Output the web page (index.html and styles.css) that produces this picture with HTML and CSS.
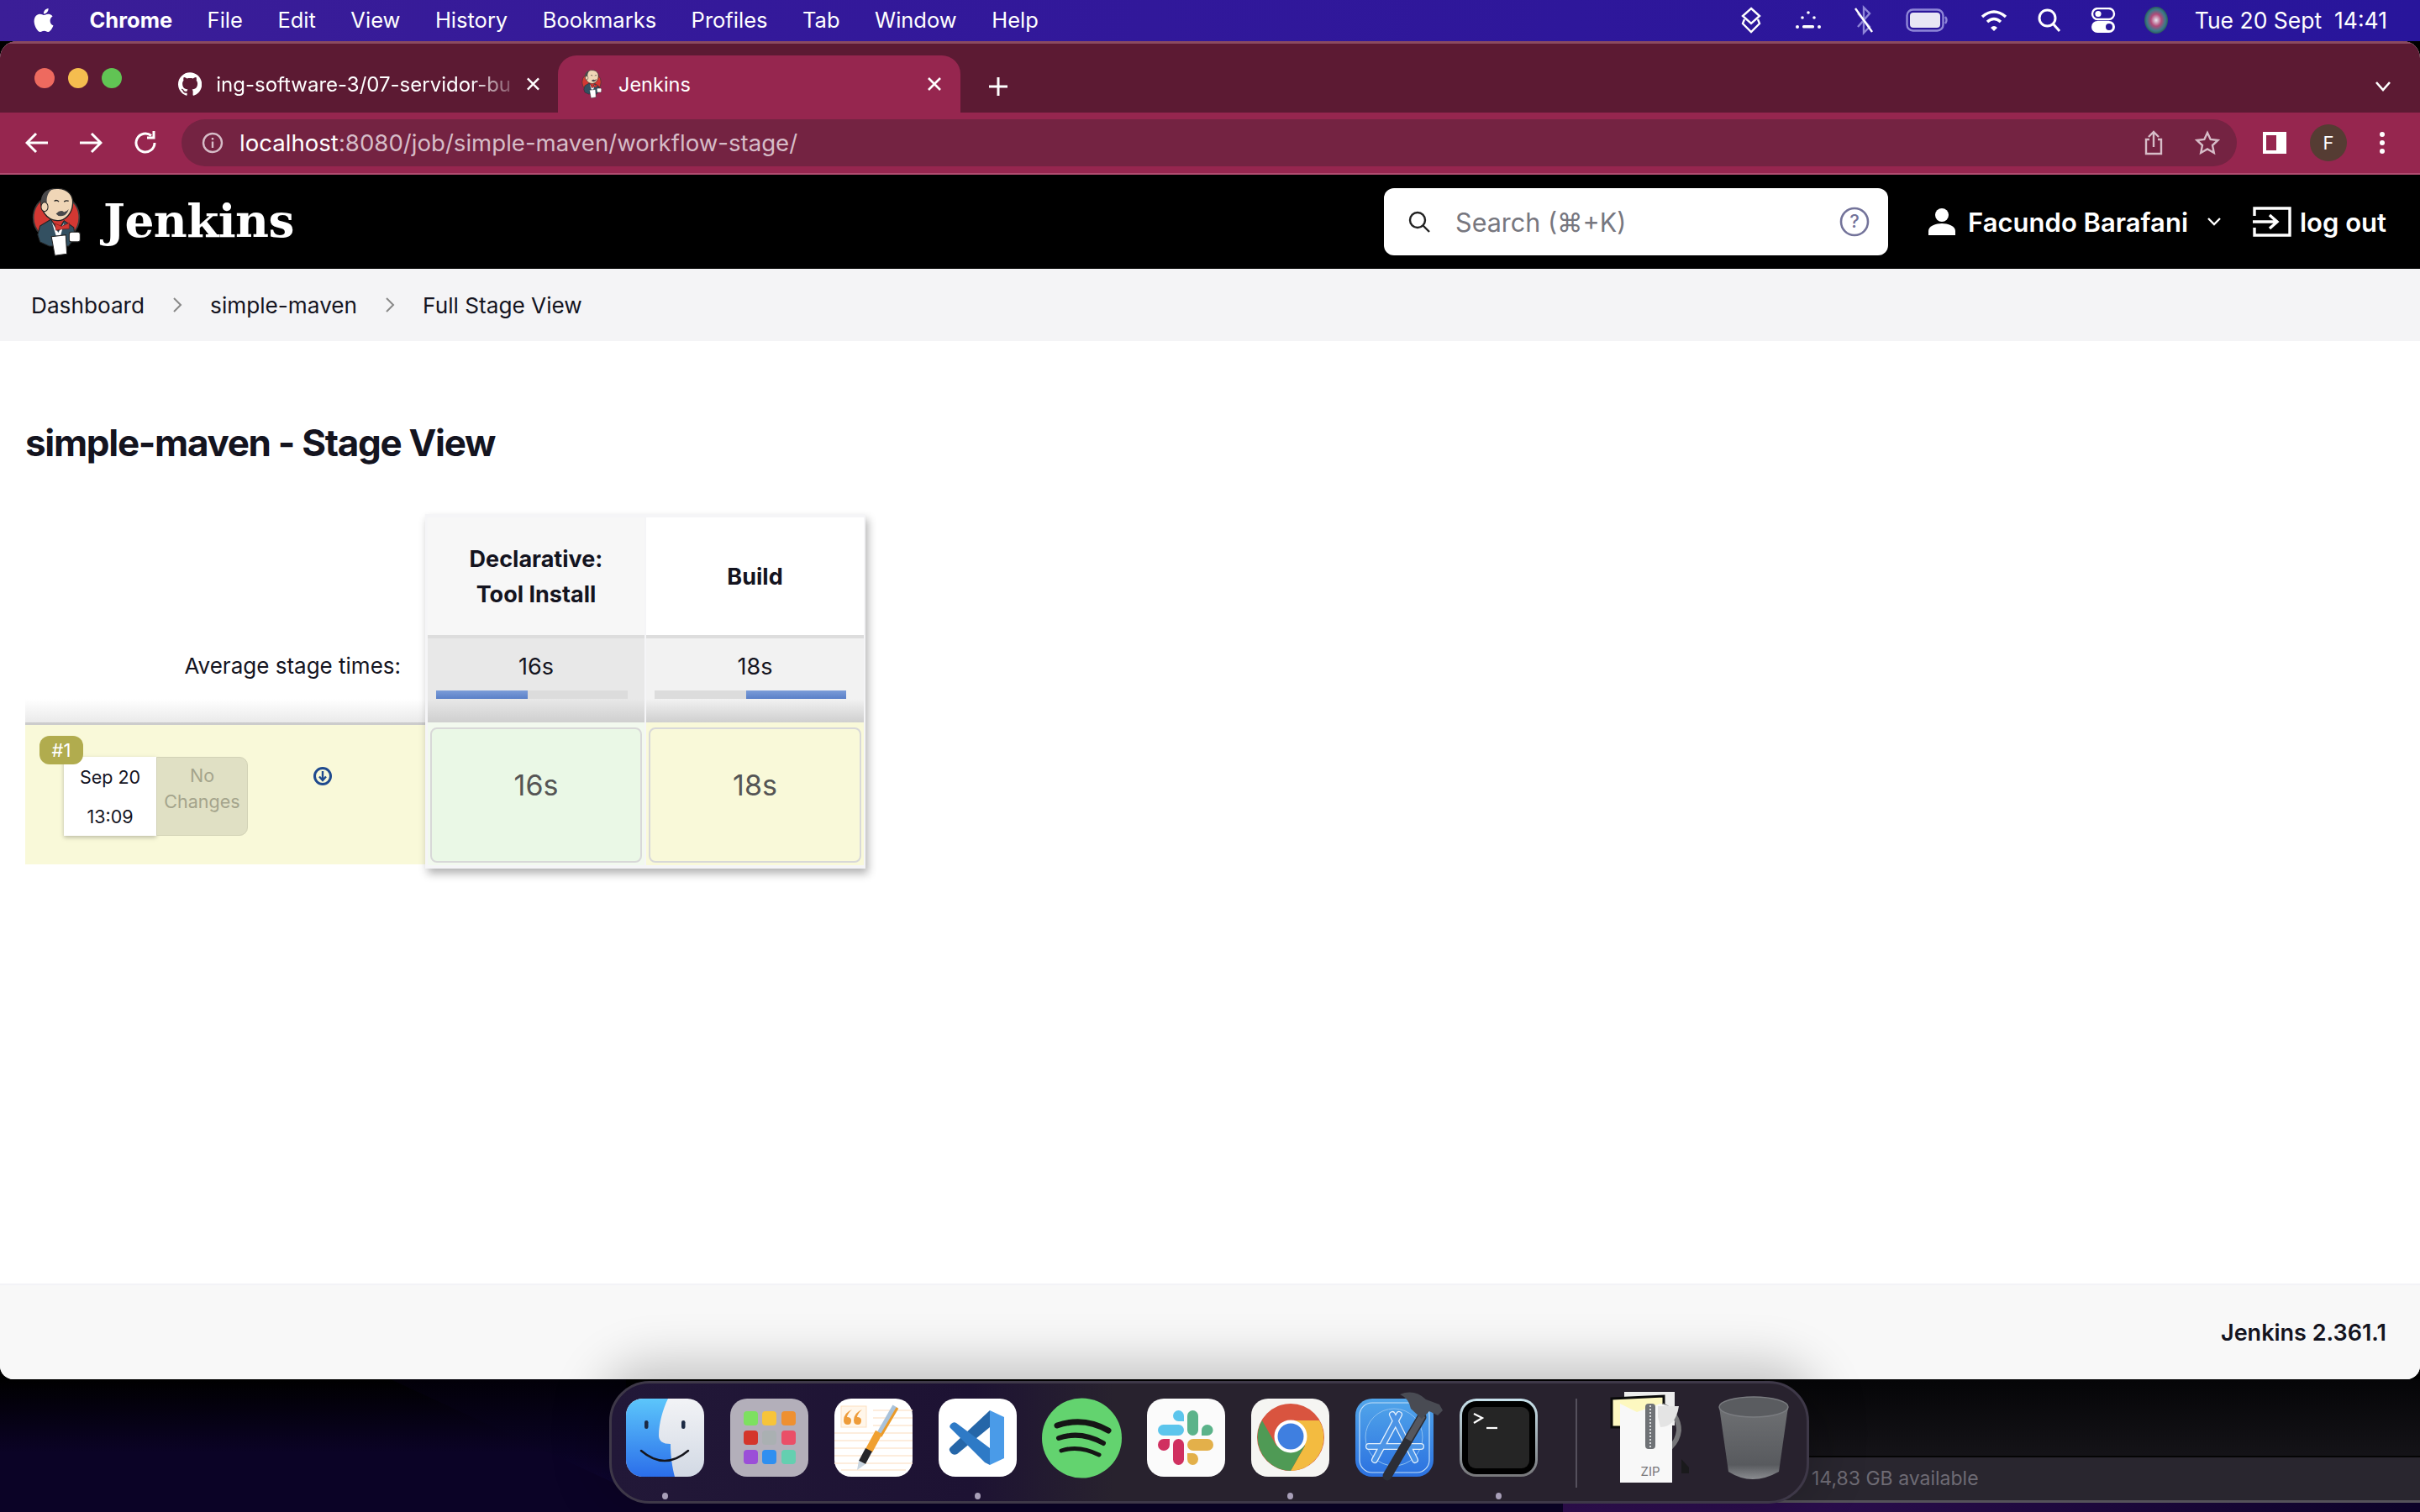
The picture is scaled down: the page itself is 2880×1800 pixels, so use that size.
FILE: index.html
```html
<!DOCTYPE html>
<html lang="en">
<head>
    <meta charset="UTF-8">
    <meta name="viewport" content="width=device-width, initial-scale=1.0">
    <title>Jenkins - Stage View</title>
    <link rel="stylesheet" href="styles.css">
</head>
<body>

    <svg class="defs" width="0" height="0">
        <symbol id="mascot" viewBox="0 0 170 240">
            <circle cx="85" cy="105" r="80" fill="#d33833" stroke="#3a3a3a" stroke-width="5"/>
            <path d="M20 165 L28 135 L66 112 L92 150 L112 116 L146 140 L150 175 L128 205 L60 205 L28 190Z" fill="#335061" stroke="#222" stroke-width="3"/>
            <path d="M70 122 L92 158 L112 124 L100 168 L84 168Z" fill="#fff"/>
            <path d="M80 126 L104 136 L130 124 L130 144 L104 146 L84 150Z" fill="#d33833" stroke="#7a1c1a" stroke-width="2"/>
            <path d="M32 60 C30 20 60 2 92 4 C128 6 146 30 142 60 C140 90 116 118 88 116 C62 114 40 98 32 60Z" fill="#f0d6b7" stroke="#222" stroke-width="4"/>
            <path d="M34 62 C26 26 50 6 72 6 C56 16 50 36 52 52 L44 60Z" fill="#49484a"/>
            <ellipse cx="44" cy="68" rx="12" ry="16" fill="#f0d6b7" stroke="#222" stroke-width="3"/>
            <path d="M78 48 Q86 42 94 50 M112 50 Q120 44 128 48" fill="none" stroke="#222" stroke-width="4"/>
            <path d="M84 92 Q100 76 112 86 Q124 82 128 76 Q122 100 100 100 Q90 100 84 92Z" fill="#49484a"/>
            <path d="M68 172 L118 166 L122 232 L80 238Z" fill="#fff" stroke="#222" stroke-width="3"/>
            <rect x="130" y="156" width="38" height="34" rx="8" fill="#fff" stroke="#222" stroke-width="3"/>
        </symbol>
        <symbol id="apple" viewBox="0 0 24 24">
            <path fill="currentColor" d="M12.152 6.896c-.948 0-2.415-1.078-3.96-1.04-2.04.027-3.91 1.183-4.961 3.014-2.117 3.675-.546 9.103 1.519 12.09 1.013 1.454 2.208 3.09 3.792 3.039 1.52-.065 2.09-.987 3.935-.987 1.831 0 2.35.987 3.96.948 1.637-.026 2.676-1.48 3.676-2.948 1.156-1.688 1.636-3.325 1.662-3.415-.039-.013-3.182-1.221-3.22-4.857-.026-3.04 2.48-4.494 2.597-4.559-1.429-2.09-3.623-2.324-4.39-2.376-2-.156-3.675 1.09-4.61 1.09zM15.53 3.83c.843-1.012 1.4-2.427 1.245-3.83-1.207.052-2.662.805-3.532 1.818-.78.896-1.454 2.338-1.273 3.714 1.338.104 2.715-.688 3.559-1.701"/>
        </symbol>
    </svg>

    <div class="menubar">
        <div class="menu-left">
            <svg class="apple-logo" width="28" height="30"><use href="#apple"/></svg>
            <span class="menu-app">Chrome</span>
            <span>File</span>
            <span>Edit</span>
            <span>View</span>
            <span>History</span>
            <span>Bookmarks</span>
            <span>Profiles</span>
            <span>Tab</span>
            <span>Window</span>
            <span>Help</span>
        </div>
        <div class="menu-right">
            <svg width="28" height="32" viewBox="0 0 28 32" fill="none" stroke="#fff" stroke-width="2.4"><path d="M14 2 L24 11 L14 20 L4 11Z"/><path d="M6 15 L4 20 L14 30 L24 20 L22 15"/></svg>
            <svg width="32" height="24" viewBox="0 0 32 24" fill="#fff"><circle cx="16" cy="3" r="1.8"/><circle cx="9" cy="9" r="1.8"/><circle cx="23" cy="9" r="1.8"/><circle cx="3" cy="20" r="2"/><rect x="9" y="18" width="14" height="3.5" rx="1.5"/><circle cx="29" cy="20" r="2"/></svg>
            <svg width="24" height="36" viewBox="0 0 24 36" fill="none" stroke="#8f86d8" stroke-width="2.4"><path d="M5 10 L19 26 L12 33 V3 L19 10 L5 26"/><path d="M2 4 L22 32" stroke="#fff"/></svg>
            <svg width="50" height="28" viewBox="0 0 50 28"><rect x="1.500" y="1.500" width="43" height="25" rx="7" fill="none" stroke="#8f86d8" stroke-width="2.400"/><rect x="5" y="5" width="36" height="18" rx="4" fill="#e8e6f4"/><path d="M47 10 Q50 14 47 18" fill="none" stroke="#8f86d8" stroke-width="2.400"/></svg>
            <svg width="34" height="28" viewBox="0 0 34 28" fill="none" stroke="#fff" stroke-width="3.600"><path d="M3 10 Q17 -2 31 10"/><path d="M9 16 Q17 9 25 16"/><path d="M13 23 L17 27 L21 23 Q17 19 13 23Z" fill="#fff" stroke="none"/></svg>
            <svg width="30" height="30" viewBox="0 0 30 30" fill="none" stroke="#fff" stroke-width="3"><circle cx="12.500" cy="12.500" r="9.500"/><path d="M19.500 19.500 L27 28"/></svg>
            <svg width="30" height="30" viewBox="0 0 30 30"><rect x="2" y="1" width="26" height="13" rx="6.500" fill="none" stroke="#fff" stroke-width="2.400"/><circle cx="9" cy="7.500" r="3.600" fill="#fff"/><rect x="1" y="16" width="28" height="14" rx="7" fill="#fff"/><circle cx="22" cy="23" r="4" fill="#2a169a"/></svg>
            <svg width="28" height="34" viewBox="0 0 28 34"><defs><radialGradient id="siri"><stop offset="0" stop-color="#e8e8f0"/><stop offset=".45" stop-color="#b04a78"/><stop offset=".8" stop-color="#3a7a8a"/><stop offset="1" stop-color="#2c5a5a"/></radialGradient></defs><ellipse cx="14" cy="17" rx="14" ry="16" fill="url(#siri)"/></svg>
            <span class="menu-clock">Tue 20 Sept&nbsp;&nbsp;14:41</span>
        </div>
    </div>

    <div class="wallpaper-wedge"></div>
    <div class="wallpaper-strip"></div>

    <div class="desktop-window">
        <div class="desktop-status">14,83 GB available</div>
    </div>

    <div class="browser">
        <div class="tabstrip">
            <div class="traffic">
                <span class="light red"></span>
                <span class="light yellow"></span>
                <span class="light green"></span>
            </div>
            <div class="tab">
                <svg width="30" height="30" viewBox="0 0 24 24"><path fill="#fff" d="M12 .297c-6.63 0-12 5.373-12 12 0 5.303 3.438 9.8 8.205 11.385.6.113.82-.258.82-.577 0-.285-.01-1.04-.015-2.04-3.338.724-4.042-1.61-4.042-1.61C4.422 18.07 3.633 17.7 3.633 17.7c-1.087-.744.084-.729.084-.729 1.205.084 1.838 1.236 1.838 1.236 1.07 1.835 2.809 1.305 3.495.998.108-.776.417-1.305.76-1.605-2.665-.3-5.466-1.332-5.466-5.93 0-1.31.465-2.38 1.235-3.22-.135-.303-.54-1.523.105-3.176 0 0 1.005-.322 3.3 1.23.96-.267 1.98-.399 3-.405 1.02.006 2.04.138 3 .405 2.28-1.552 3.285-1.23 3.285-1.23.645 1.653.24 2.873.12 3.176.765.84 1.23 1.91 1.23 3.22 0 4.61-2.805 5.625-5.475 5.92.42.36.81 1.096.81 2.22 0 1.606-.015 2.896-.03 3.286 0 .315.21.69.825.57C20.565 22.092 24 17.592 24 12.297c0-6.627-5.373-12-12-12"/></svg>
                <span class="tab-title fade">ing-software-3/07-servidor-bu</span>
                <svg class="tab-close" width="18" height="18" viewBox="0 0 18 18"><path d="M2 2 L16 16 M16 2 L2 16" stroke="#fff" stroke-width="2.600"/></svg>
            </div>
            <div class="tab tab-active">
                <svg width="24" height="34"><use href="#mascot"/></svg>
                <span class="tab-title">Jenkins</span>
                <svg class="tab-close" width="18" height="18" viewBox="0 0 18 18"><path d="M2 2 L16 16 M16 2 L2 16" stroke="#fff" stroke-width="2.600"/></svg>
            </div>
            <svg class="new-tab" width="24" height="24" viewBox="0 0 24 24"><path d="M12 1 V23 M1 12 H23" stroke="#fff" stroke-width="3"/></svg>
            <svg class="tab-list" width="20" height="14" viewBox="0 0 20 14"><path d="M2 2 L10 11 L18 2" fill="none" stroke="#fff" stroke-width="2.600"/></svg>
        </div>

        <div class="toolbar">
            <svg width="28" height="28" viewBox="0 0 28 28" fill="none" stroke="#fff" stroke-width="3"><path d="M27 14 H3 M13 3 L2 14 L13 25"/></svg>
            <svg width="28" height="28" viewBox="0 0 28 28" fill="none" stroke="#fff" stroke-width="3"><path d="M1 14 H25 M15 3 L26 14 L15 25"/></svg>
            <svg width="30" height="30" viewBox="0 0 30 30" fill="none" stroke="#fff" stroke-width="3"><path d="M26 15 A11 11 0 1 1 22 6.500"/><path d="M25 1 V9 H17" /></svg>
            <div class="addressbar">
                <svg width="26" height="26" viewBox="0 0 26 26" fill="none" stroke="#d6bcc7" stroke-width="2.400"><circle cx="13" cy="13" r="11"/><path d="M13 11.500 V19 M13 7 V9.500"/></svg>
                <span class="url"><span class="url-host">localhost</span>:8080/job/simple-maven/workflow-stage/</span>
                <svg class="addr-share" width="26" height="30" viewBox="0 0 26 30" fill="none" stroke="#d6bcc7" stroke-width="2.400"><path d="M8 11 H4 V28 H22 V11 H18 M13 20 V2 M7 8 L13 2 L19 8"/></svg>
                <svg width="30" height="30" viewBox="0 0 30 30" fill="none" stroke="#d6bcc7" stroke-width="2.400"><path d="M15 3 L18.700 11 L27.500 12 L21 18 L22.800 27 L15 22.500 L7.200 27 L9 18 L2.500 12 L11.300 11Z"/></svg>
            </div>
            <div class="toolbar-right">
                <svg width="28" height="26" viewBox="0 0 28 26"><path fill-rule="evenodd" d="M0 0 H28 V26 H0Z M4 4 V22 H16 V4Z" fill="#fff"/></svg>
                <span class="avatar">F</span>
                <svg class="toolbar-dots" width="8" height="28" viewBox="0 0 8 28" fill="#fff"><circle cx="4" cy="4" r="3"/><circle cx="4" cy="14" r="3"/><circle cx="4" cy="24" r="3"/></svg>
            </div>
        </div>

        <header class="jenkins-header">
            <svg class="jenkins-logo" width="58" height="82"><use href="#mascot"/></svg>
            <span class="jenkins-name">Jenkins</span>
            <div class="search-box">
                <svg width="28" height="28" viewBox="0 0 28 28" fill="none" stroke="#222" stroke-width="2.400"><circle cx="12" cy="12" r="9"/><path d="M18.500 18.500 L26 26"/></svg>
                <span class="search-text">Search (⌘+K)</span>
                <svg class="search-help" width="36" height="36" viewBox="0 0 36 36" fill="none" stroke="#73739a" stroke-width="2.600"><circle cx="18" cy="18" r="16"/><text x="18" y="25" text-anchor="middle" class="help-mark">?</text></svg>
            </div>
            <div class="user-menu">
                <svg width="34" height="32" viewBox="0 0 34 32" fill="#fff"><circle cx="17" cy="8" r="8"/><path d="M1 32 V27 C1 21 10 18 17 18 C24 18 33 21 33 27 V32Z"/></svg>
                <span>Facundo Barafani</span>
                <svg class="user-chevron" width="18" height="12" viewBox="0 0 18 12"><path d="M2 2 L9 9 L16 2" fill="none" stroke="#fff" stroke-width="2.400"/></svg>
            </div>
            <div class="logout">
                <svg width="46" height="36" viewBox="0 0 46 36" fill="none" stroke="#fff" stroke-width="3.400"><path d="M2 11 V2 H44 V34 H2 V25"/><path d="M0 18 H28 M20 10 L29 18 L20 26"/></svg>
                <span>log out</span>
            </div>
        </header>

        <nav class="breadcrumb">
            <span>Dashboard</span>
            <svg width="12" height="20" viewBox="0 0 12 20"><path d="M2 2 L10 10 L2 18" fill="none" stroke="#888" stroke-width="2"/></svg>
            <span>simple-maven</span>
            <svg width="12" height="20" viewBox="0 0 12 20"><path d="M2 2 L10 10 L2 18" fill="none" stroke="#888" stroke-width="2"/></svg>
            <span>Full Stage View</span>
        </nav>

        <main class="content">
            <h1>simple-maven - Stage View</h1>
            <div class="stage-view">
                <div class="stage-side">
                    <div class="side-head"></div>
                    <div class="side-avg">Average stage times:</div>
                    <div class="side-run">
                        <div class="run-card">
                            <span class="run-badge">#1</span>
                            <div class="run-date">
                                <span>Sep 20</span>
                                <span>13:09</span>
                            </div>
                            <div class="run-changes">No Changes</div>
                        </div>
                        <svg class="run-download" width="24" height="24" viewBox="0 0 24 24" fill="none" stroke="#1f4a8e" stroke-width="3"><circle cx="12" cy="12" r="9.500"/><path d="M12 6 V16 M8 12.500 L12 17 L16 12.500" stroke-width="2.400"/></svg>
                    </div>
                </div>
                <div class="stage-table">
                    <div class="stage-head stage-head-odd">Declarative:<br>Tool Install</div>
                    <div class="stage-head">Build</div>
                    <div class="stage-avg stage-avg-odd">
                        <span>16s</span>
                        <div class="avg-bar"><div class="avg-fill fill-one"></div></div>
                    </div>
                    <div class="stage-avg">
                        <span>18s</span>
                        <div class="avg-bar"><div class="avg-fill fill-two"></div></div>
                    </div>
                    <div class="stage-slot slot-green"><div class="stage-cell">16s</div></div>
                    <div class="stage-slot slot-yellow"><div class="stage-cell">18s</div></div>
                </div>
            </div>
        </main>

        <footer class="jenkins-footer">Jenkins 2.361.1</footer>
    </div>

    <div class="dock">
        <!-- finder -->
        <div class="dock-item running">
            <svg width="93" height="93" viewBox="0 0 93 93">
                <defs>
                    <linearGradient id="fblue" x1="0" y1="0" x2="0" y2="1"><stop offset="0" stop-color="#5cc6fb"/><stop offset="1" stop-color="#2b6eea"/></linearGradient>
                    <linearGradient id="fwhite" x1="0" y1="0" x2="0" y2="1"><stop offset="0" stop-color="#f2f3f6"/><stop offset="1" stop-color="#d2d9e4"/></linearGradient>
                </defs>
                <rect width="93" height="93" rx="20" fill="url(#fwhite)"/>
                <path d="M20 0 H50 C44 12 39 30 39 44 Q39 54 53 54 C53 68 55 82 58 93 H20 A20 20 0 0 1 0 73 V20 A20 20 0 0 1 20 0Z" fill="url(#fblue)"/>
                <rect x="22" y="26" width="4.500" height="10" rx="2.200" fill="#1c2a44"/>
                <rect x="66" y="26" width="4.500" height="10" rx="2.200" fill="#1c2a44"/>
                <path d="M18 62 Q46 86 74 62" fill="none" stroke="#15151c" stroke-width="2.500" stroke-linecap="round"/>
            </svg>
        </div>
        <!-- launchpad -->
        <div class="dock-item">
            <svg width="93" height="93" viewBox="0 0 93 93">
                <rect width="93" height="93" rx="20" fill="#b3afba"/>
                <rect x="16" y="15" width="17" height="17" rx="4" fill="#7de060"/><rect x="38" y="15" width="17" height="17" rx="4" fill="#f7c43a"/><rect x="61" y="15" width="17" height="17" rx="4" fill="#ee9030"/>
                <rect x="16" y="38" width="17" height="17" rx="4" fill="#d4352a"/><rect x="38" y="38" width="17" height="17" rx="4" fill="#aab0b2"/><rect x="61" y="38" width="17" height="17" rx="4" fill="#ea4f68"/>
                <rect x="16" y="61" width="17" height="17" rx="4" fill="#9b4fd8"/><rect x="38" y="61" width="17" height="17" rx="4" fill="#2f8ff0"/><rect x="61" y="61" width="17" height="17" rx="4" fill="#64cfb0"/>
            </svg>
        </div>
        <!-- pages -->
        <div class="dock-item">
            <svg width="93" height="93" viewBox="0 0 93 93">
                <rect width="93" height="93" rx="20" fill="#fff"/>
                <path d="M46 14 H93 M46 23 H93 M46 32 H93 M0 41 H93 M0 50 H93 M0 59 H93 M0 68 H93 M0 77 H93 M8 85 H85" stroke="#fde8d2" stroke-width="1.500"/>
                <rect x="8" y="9" width="30" height="25" fill="#fff6ea" stroke="#fde0c0" stroke-width="1"/>
                <path d="M21 13 Q11 17 11 26 Q11 31 16 31 Q20 31 20 26 Q20 22 15 22 Q16 17 21 13Z M33 13 Q23 17 23 26 Q23 31 28 31 Q32 31 32 26 Q32 22 27 22 Q28 17 33 13Z" fill="#ee9c3a"/>
                <path d="M72 9 L53 42" stroke="#a9c2da" stroke-width="6"/>
                <path d="M75 11 L55 45" stroke="#eb9a28" stroke-width="3"/>
                <path d="M53 40 L41 62" stroke="#f0a030" stroke-width="9"/>
                <path d="M41 61 L33 76" stroke="#26262a" stroke-width="9"/>
                <path d="M29 74 L37 78 L27 85Z" fill="#c8d4de"/>
            </svg>
        </div>
        <!-- vs code -->
        <div class="dock-item running">
            <svg width="93" height="93" viewBox="0 0 93 93">
                <rect width="93" height="93" rx="20" fill="#fff"/>
                <path d="M61 14 V34 L22 66 Q18 68 15 65 L13 62 Q12 60 14 58Z" fill="#2566a8"/>
                <path d="M14 35 Q12 33 15 30 Q18 27 21 29 L61 59 V79 L55 76Z" fill="#2e7ac6"/>
                <path d="M61 14 L78 22 V71 L61 79Z" fill="#4a9be8"/>
            </svg>
        </div>
        <!-- spotify -->
        <div class="dock-item dock-spotify">
            <svg width="95" height="96" viewBox="0 0 95 96">
                <circle cx="47.500" cy="48" r="47.500" fill="#63d36f"/>
                <path d="M18 33 Q50 22 79 39" fill="none" stroke="#151515" stroke-width="7" stroke-linecap="round"/>
                <path d="M20 48 Q46 39 73 54" fill="none" stroke="#151515" stroke-width="6" stroke-linecap="round"/>
                <path d="M23 63 Q44 56 68 68" fill="none" stroke="#151515" stroke-width="5" stroke-linecap="round"/>
            </svg>
        </div>
        <!-- slack -->
        <div class="dock-item">
            <svg width="93" height="93" viewBox="0 0 93 93">
                <rect width="93" height="93" rx="20" fill="#fbfbfb"/>
                <path d="M44 27 H37.500 A6.500 6.500 0 1 1 44 20.500Z" fill="#5cc5ec"/><rect x="13" y="31" width="31" height="13" rx="6.500" fill="#5cc5ec"/>
                <rect x="48" y="14" width="13" height="30" rx="6.500" fill="#5bb38a"/><path d="M65 44 V37.500 A6.800 6.500 0 1 1 71.800 44Z" fill="#5bb38a"/>
                <path d="M27 48 V55 A7 7 0 1 1 20 48Z" fill="#d03060"/><rect x="31" y="48" width="13" height="31" rx="6.500" fill="#d03060"/>
                <rect x="48" y="48" width="31" height="14" rx="7" fill="#e3b04a"/><path d="M48 65 H54.500 A6.500 7 0 1 1 48 72Z" fill="#e3b04a"/>
            </svg>
        </div>
        <!-- chrome -->
        <div class="dock-item running">
            <svg width="93" height="93" viewBox="0 0 93 93">
                <rect width="93" height="93" rx="20" fill="#f5f5f2"/>
                <circle cx="47" cy="46" r="40" fill="#d9543f"/>
                <path d="M81 26 A40 40 0 0 1 47 86 L64 56 L47 26Z" fill="#f3bb40"/>
                <path d="M47 86 A40 40 0 0 1 13 26 L30 56 L64 56Z" fill="#4f9a55"/>
                <circle cx="47" cy="45" r="19.500" fill="#fff"/>
                <circle cx="47" cy="45" r="15.500" fill="#3f7fe0"/>
            </svg>
        </div>
        <!-- xcode -->
        <div class="dock-item">
            <svg width="93" height="93" viewBox="0 0 93 93">
                <defs><linearGradient id="xblue" x1="0" y1="0" x2="0" y2="1"><stop offset="0" stop-color="#52a6ea"/><stop offset="1" stop-color="#2b71e0"/></linearGradient></defs>
                <rect width="93" height="93" rx="20" fill="url(#xblue)"/>
                <rect x="5" y="5" width="83" height="83" rx="15" fill="none" stroke="#c4dff8" stroke-width="1.200"/>
                <circle cx="46" cy="46" r="34" fill="none" stroke="#8cc0f0" stroke-width="1"/>
                <g fill="none" stroke-linecap="round">
                    <path d="M44 19 L71 73 M52 19 L23 73 M16 57 H78" stroke="#e6f1fc" stroke-width="8"/>
                    <path d="M44 19 L71 73 M52 19 L23 73 M16 57 H78" stroke="#4c94e6" stroke-width="5.500"/>
                </g>
                <path d="M79 22 L38 92" stroke="#2c2e36" stroke-width="11" stroke-linecap="round"/>
                <path d="M80 20 L63 49" stroke="#55575f" stroke-width="8"/>
                <path d="M53 -5 Q70 -12 84 1 L100 7 L104 14 L98 20 L88 15 L79 24 L66 12 Q64 0 53 -5Z" fill="#494b53"/>
            </svg>
        </div>
        <!-- terminal -->
        <div class="dock-item running">
            <svg width="93" height="93" viewBox="0 0 93 93">
                <defs><linearGradient id="tbevel" x1="0" y1="0" x2="0" y2="1"><stop offset="0" stop-color="#c8e2ec"/><stop offset="1" stop-color="#77777a"/></linearGradient></defs>
                <rect width="93" height="93" rx="20" fill="url(#tbevel)"/>
                <rect x="3" y="3" width="87" height="87" rx="17" fill="#000"/>
                <rect x="10" y="10" width="73" height="73" rx="9" fill="#252525"/>
                <path d="M17 18 L27 23 L17 29" fill="none" stroke="#fff" stroke-width="2.200"/>
                <path d="M32 35 H45" stroke="#fff" stroke-width="2.200"/>
            </svg>
        </div>
        <span class="dock-sep"></span>
        <!-- zip file stack -->
        <div class="dock-item dock-zip">
            <svg width="100" height="108" viewBox="0 0 100 108">
                <rect x="15" y="0" width="60" height="40" fill="#ededed"/>
                <path d="M0 8 L62 5 L62 22 L30 42 L0 42Z" fill="#fdf8c0" stroke="#0a0a0a" stroke-width="3"/>
                <path d="M60 16 A32 32 0 0 1 80 46 A32 32 0 0 1 70 66" fill="none" stroke="#77777a" stroke-width="6"/>
                <path d="M83 80 L92 90 V97 H83Z" fill="#1a1a1c"/>
                <path d="M10 14 L30 24 L58 14 L72 18 V108 H10Z" fill="#f8f8f8"/>
                <path d="M55 17 H80 Q76 42 58 42 L55 30Z" fill="#e4e4e4"/>
                <rect x="40" y="14" width="12" height="54" rx="4" fill="#6f7276"/>
                <path d="M46 16 V66" stroke="#d4d6d8" stroke-width="2" stroke-dasharray="2 2"/>
                <text x="46" y="100" text-anchor="middle" class="zip-label">ZIP</text>
            </svg>
        </div>
        <!-- trash -->
        <div class="dock-item dock-trash">
            <svg width="84" height="102" viewBox="0 0 84 102">
                <defs><linearGradient id="trash" x1="0" y1="0" x2="0" y2="1"><stop offset="0" stop-color="#6e7073"/><stop offset=".8" stop-color="#585a5e"/><stop offset="1" stop-color="#8a8c90"/></linearGradient></defs>
                <path d="M1 13 L12 90 Q40 108 72 90 L83 13Z" fill="url(#trash)"/>
                <ellipse cx="42" cy="13" rx="41" ry="12" fill="#5a5c60" stroke="#7a7c80" stroke-width="1.500"/>
            </svg>
        </div>
    </div>

</body>
</html>
```

FILE: styles.css
```css
* {
    margin: 0;
    padding: 0;
    box-sizing: border-box;
}

body {
    position: relative;
    width: 2880px;
    height: 1800px;
    overflow: hidden;
    font-family: Inter, "Noto Sans", sans-serif;
    background: linear-gradient(#000 1642px, #0b0326 1730px);
}

.defs {
    position: absolute;
}

/* mac menu bar */
.menubar {
    display: flex;
    justify-content: space-between;
    align-items: center;
    height: 49px;
    padding: 0 39px 2px 38px;
    background: linear-gradient(90deg, #3b1e97 0%, #34199a 30%, #28159b 100%);
    color: #fff;
    font-size: 25.5px;
}

.menu-left {
    display: flex;
    align-items: center;
    gap: 41.500px;
}

.apple-logo {
    color: #fff;
    margin-right: -1px;
}

.menu-app {
    font-weight: 700;
}

.menu-right {
    display: flex;
    align-items: center;
    gap: 34px;
}

.menu-right svg:nth-child(-n+4) {
    margin-right: 4px;
}

.menu-clock {
    margin-left: -2px;
    font-size: 26.5px;
}

/* desktop behind the browser */
.wallpaper-wedge {
    position: absolute;
    left: 465px;
    top: 1642px;
    width: 280px;
    height: 130px;
    background: linear-gradient(#020008, #0e0532);
    clip-path: polygon(0 0, 100% 0, 100% 100%);
}

.wallpaper-strip {
    position: absolute;
    left: 1860px;
    top: 1788px;
    width: 1020px;
    height: 12px;
    background: linear-gradient(90deg, #2f0f50 0%, #2a0d4c 30%, #0c0228 100%);
}

.desktop-window {
    position: absolute;
    left: 2100px;
    top: 1642px;
    display: flex;
    width: 780px;
    height: 147px;
    background: linear-gradient(#050507, #1e1c22);
}

.desktop-status {
    align-self: flex-end;
    width: 100%;
    height: 56px;
    padding: 11px 0 0 56px;
    background: #29262f;
    border-top: 2px solid #050505;
    border-bottom: 3px solid #55525a;
    color: #6e6b74;
    font-size: 23px;
}

/* browser */
.browser {
    position: relative;
    display: flex;
    flex-direction: column;
    height: 1593px;
    border-radius: 20px 20px 16px 16px;
    overflow: hidden;
    background: #fff;
}

.tabstrip {
    display: flex;
    align-items: flex-end;
    height: 85px;
    padding-left: 41px;
    background: #5c1a33;
    border-top: 3px solid #8a4a60;
    color: #fff;
    font-size: 24px;
}

.traffic {
    display: flex;
    gap: 16px;
    align-self: flex-start;
    margin-top: 29px;
    width: 171px;
}

.light {
    width: 24px;
    height: 24px;
    border-radius: 50%;
}

.red {
    background: #ee6a5f;
}

.yellow {
    background: #f5bd4f;
}

.green {
    background: #61c454;
}

.tab {
    display: flex;
    align-items: center;
    width: 452px;
    height: 68px;
    padding: 0 21px 0 0;
}

.tab-title {
    margin-left: 17px;
    white-space: nowrap;
    flex: 1;
}

.fade {
    -webkit-mask-image: linear-gradient(90deg, #000 86%, rgba(0, 0, 0, 0.25) 100%);
    mask-image: linear-gradient(90deg, #000 86%, rgba(0, 0, 0, 0.25) 100%);
}

.tab-close {
    margin-left: 18px;
}

.tab-active {
    width: 479px;
    padding: 0 22px 0 28px;
    background: #96264f;
    border-radius: 22px 22px 0 0;
}

.tab-active .tab-title {
    margin-left: 20px;
    font-size: 23.5px;
}

.new-tab {
    align-self: center;
    margin: 20px 0 0 33px;
}

.tab-list {
    align-self: center;
    margin: 20px 34px 0 auto;
}

.toolbar {
    display: flex;
    align-items: center;
    gap: 36px;
    height: 74px;
    padding: 0 0 0 30px;
    background: #96264f;
    border-bottom: 2px solid #b04c70;
}

.addressbar {
    display: flex;
    align-items: center;
    gap: 19px;
    width: 2446px;
    height: 56px;
    margin-left: -8px;
    padding: 0 20px 0 24px;
    border-radius: 28px;
    background: #742342;
}

.url {
    flex: 1;
    color: #d6bcc7;
    font-size: 27.6px;
}

.url-host {
    color: #fff;
}

.addr-share {
    margin-right: 17px;
}

.toolbar-right {
    display: flex;
    align-items: center;
    gap: 28px;
    margin-left: -5px;
}

.toolbar-dots {
    margin-left: 10px;
}

.avatar {
    display: flex;
    justify-content: center;
    align-items: center;
    width: 44px;
    height: 44px;
    border-radius: 50%;
    background: #553c33;
    color: #fff;
    font-size: 22px;
}

/* jenkins header */
.jenkins-header {
    display: flex;
    align-items: center;
    height: 112px;
    padding: 0 40px 0 38px;
    background: #000;
    color: #fff;
    font-size: 31px;
    font-weight: 600;
}

.jenkins-name {
    margin: 0 0 4px 27px;
    font-family: "DejaVu Serif", "Liberation Serif", serif;
    font-size: 55px;
    font-weight: 700;
    letter-spacing: -0.6px;
}

.search-box {
    display: flex;
    align-items: center;
    width: 600px;
    height: 80px;
    margin-left: auto;
    padding: 0 22px 0 28px;
    border-radius: 12px;
    background: #fff;
}

.search-text {
    margin-left: 29px;
    flex: 1;
    color: #77777f;
    font-size: 30.5px;
    font-weight: 400;
}

.help-mark {
    fill: #73739a;
    stroke: none;
    font-size: 22px;
    font-weight: 500;
}

.user-menu {
    display: flex;
    align-items: center;
    margin-left: 47px;
    gap: 14px;
}

.user-chevron {
    margin-left: 8px;
}

.logout {
    display: flex;
    align-items: center;
    gap: 10px;
    margin-left: 37px;
}

.breadcrumb {
    display: flex;
    align-items: center;
    gap: 33px;
    height: 86px;
    padding-left: 37px;
    background: #f4f4f6;
    color: #14141f;
    font-size: 26.2px;
}

/* stage view */
.content {
    flex: 1;
    padding: 0 0 0 30px;
}

h1 {
    margin: 94px 0 58px;
    font-size: 44px;
    font-weight: 700;
    line-height: 54px;
    letter-spacing: -1.3px;
    color: #14141f;
}

.stage-view {
    display: flex;
    color: #14141f;
    font-size: 27px;
}

.stage-side {
    width: 476px;
}

.side-head {
    height: 148px;
}

.side-avg {
    height: 100px;
    padding: 17px 29px 0 0;
    font-size: 26px;
    text-align: right;
    background: linear-gradient(#fff 72%, #eaeaea 100%);
}

.side-run {
    display: flex;
    align-items: flex-start;
    height: 169px;
    border-top: 3px solid #ccc;
    background: #f9f9d9;
}

.run-card {
    position: relative;
    display: flex;
    margin: 38px 0 0 46px;
    height: 94px;
    font-size: 21.5px;
}

.run-badge {
    position: absolute;
    left: -29px;
    top: -25px;
    width: 52px;
    height: 34px;
    border-radius: 12px;
    background: #b1ac4e;
    color: #fff;
    font-size: 22px;
    line-height: 34px;
    text-align: center;
}

.run-date {
    display: flex;
    flex-direction: column;
    justify-content: space-around;
    align-items: center;
    width: 110px;
    background: #fff;
    box-shadow: 0 2px 5px rgba(0, 0, 0, 0.25);
}

.run-changes {
    width: 109px;
    padding: 6px 4px 0;
    text-align: center;
    line-height: 31px;
    color: #a4a48c;
    background: #e0e0c4;
    border: 1px solid #d2d2b6;
    border-radius: 0 10px 10px 0;
}

.run-download {
    margin: 49px 0 0 77px;
}

.stage-table {
    display: grid;
    grid-template-columns: 258px 259px;
    grid-template-rows: 144px 100px 170px;
    column-gap: 2px;
    width: 524px;
    height: 422px;
    padding: 4px 2px 0 3px;
    background: #f5f5f7;
    box-shadow: 3px 6px 10px rgba(0, 0, 0, 0.3);
    text-align: center;
}

.stage-head {
    display: flex;
    justify-content: center;
    align-items: center;
    padding-top: 2px;
    background: #fff;
    border-bottom: 4px solid #ddd;
    font-weight: 700;
    line-height: 42px;
}

.stage-head-odd {
    background: #f7f7f7;
}

.stage-avg {
    padding-top: 17px;
    background: linear-gradient(#f2f2f2 72%, #cfcfcf 100%);
}

.stage-avg-odd {
    background: linear-gradient(#e8e8e8 72%, #cfcfcf 100%);
}

.avg-bar {
    position: relative;
    width: 228px;
    height: 10px;
    margin: 12px 0 0 10px;
    background: #dcdcdc;
}

.avg-fill {
    position: absolute;
    top: 0;
    height: 10px;
    background: linear-gradient(#7b9cd8, #5a80c8);
}

.fill-one {
    left: 0;
    width: 48%;
}

.fill-two {
    right: 0;
    width: 52%;
}

.stage-slot {
    padding: 6px 3px 3px;
}

.slot-green {
    background: #f2f9ee;
}

.slot-yellow {
    background: #f9f9d9;
}

.stage-cell {
    height: 100%;
    padding-top: 46px;
    border: 2px solid #d8d8d8;
    border-radius: 8px;
    font-size: 34px;
    color: #555;
}

.slot-green .stage-cell {
    background: #eaf8e6;
}

.slot-yellow .stage-cell {
    background: #f9f9d9;
}

.jenkins-footer {
    display: flex;
    justify-content: flex-end;
    align-items: center;
    height: 114px;
    padding: 0 40px 0 0;
    background: #f8f8f8;
    border-top: 2px solid #f3f3f7;
    color: #14141f;
    font-size: 27px;
    font-weight: 600;
}

/* dock */
.dock {
    position: absolute;
    left: 725px;
    top: 1644px;
    display: flex;
    align-items: flex-start;
    gap: 31px;
    width: 1428px;
    height: 146px;
    padding: 18px 0 0 17px;
    border: 3px solid #3e3848;
    border-radius: 48px;
    background: linear-gradient(90deg, #221838 0%, #1d1233 30%, #28222e 42%, #28222e 100%);
    box-shadow: 0 -10px 60px 10px rgba(0, 0, 0, 0.22);
}

.dock-item {
    position: relative;
    display: flex;
    justify-content: center;
    width: 93px;
    height: 93px;
}

.dock-item svg {
    overflow: visible;
    flex: none;
}

.dock-spotify {
    margin-top: -1px;
}

.dock-zip {
    margin-top: -8px;
}

.dock-trash {
    margin-top: -3px;
    justify-content: flex-start;
}

.running::after {
    content: "";
    position: absolute;
    left: 43px;
    top: 112px;
    width: 7px;
    height: 8px;
    border-radius: 50%;
    background: #a89fb8;
}

.dock-sep {
    width: 2px;
    height: 106px;
    margin: 0 13px 0 14px;
    background: #55505c;
}

.zip-label {
    fill: #77777a;
    font-size: 15px;
}
```
